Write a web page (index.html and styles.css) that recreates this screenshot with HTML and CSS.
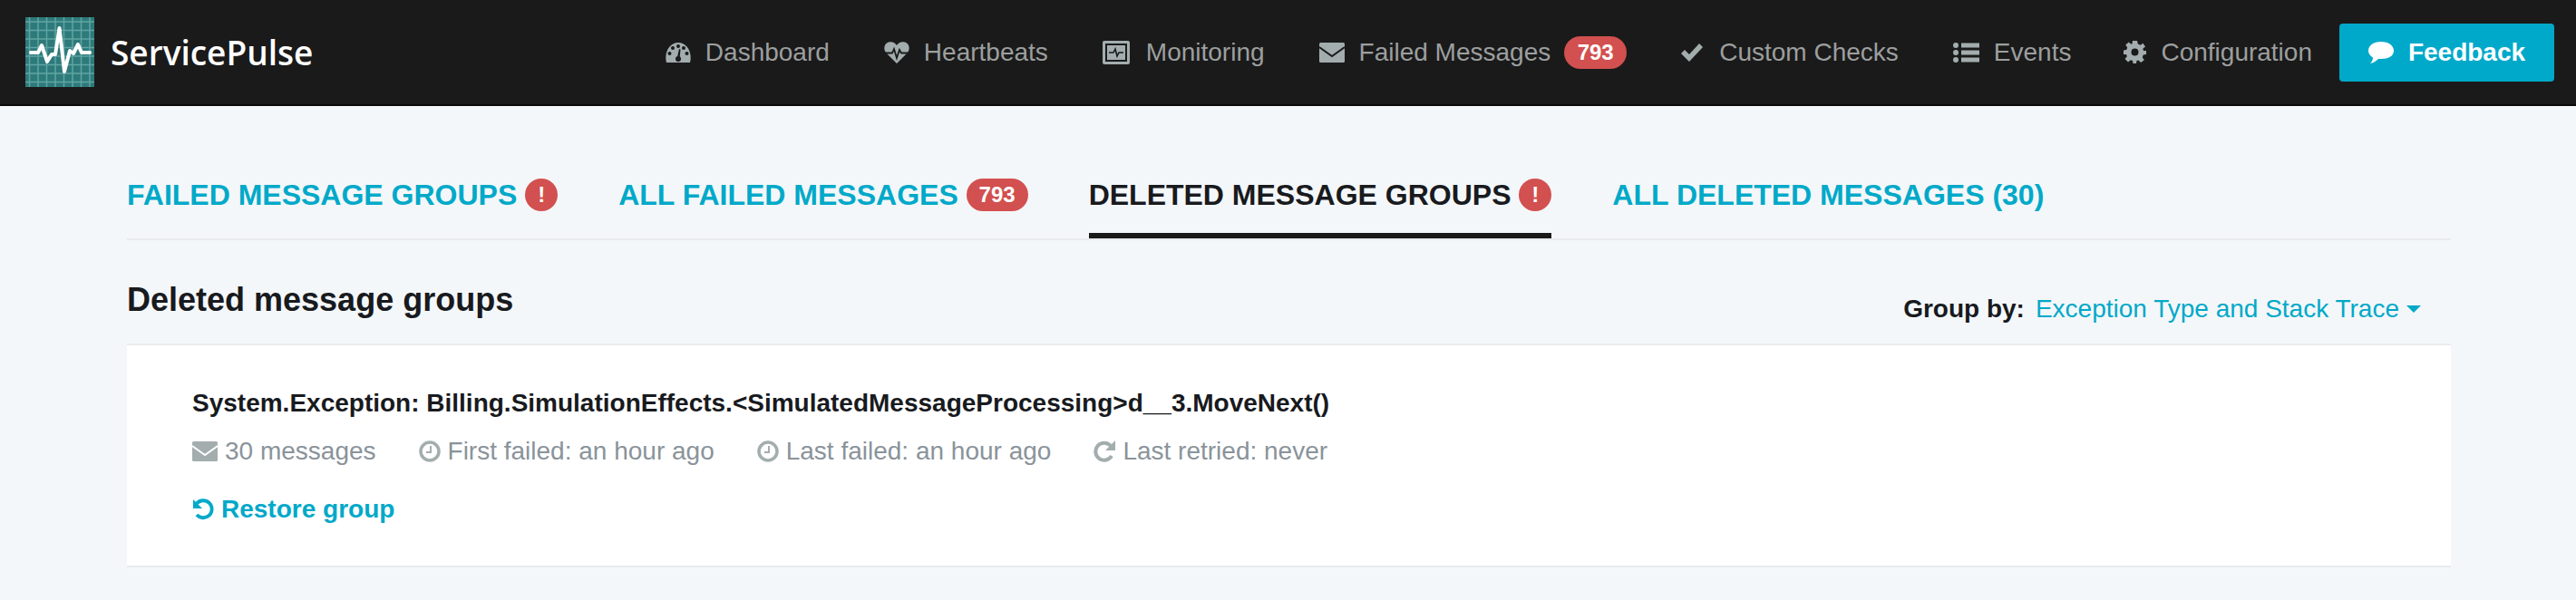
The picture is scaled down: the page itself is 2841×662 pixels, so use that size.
FILE: index.html
```html
<!DOCTYPE html>
<html>
<head lang="en">
    <meta charset="UTF-8">
    <title>ServicePulse</title>
    <link rel="stylesheet" href="styles.css">
</head>
<body>
    <header class="navbar">
        <a class="brand">
            <svg class="logo" viewBox="0 0 76 77">
                <rect width="76" height="77" fill="#2e7a7b"/>
                <path d="M4.500 0V77M14 0V77M23.500 0V77M33 0V77M42.500 0V77M52 0V77M61.500 0V77M71 0V77M0 5H76M0 14.500H76M0 24H76M0 33.500H76M0 43H76M0 52.500H76M0 62H76M0 71.500H76" stroke="#5fa5a3" stroke-width="1.500" fill="none"/>
                <path d="M6 39H14L18 31L24 49L29 41H33L37.500 12L43 60L49 37L53 40L58 30L62 39H71" stroke="#fff" stroke-width="4" stroke-linejoin="round" stroke-linecap="round" fill="none"/>
            </svg>
            <span class="brand-name">ServicePulse</span>
        </a>
        <nav class="nav">
            <a class="nav-item">
                <svg class="ico" width="28" height="22" viewBox="0 0 28 22"><path d="M1 22C-2 10 5 0 14 0S30 10 27 22Z" fill="#a3adad"/><g fill="#1a1a1a"><circle cx="8" cy="6" r="2"/><circle cx="14" cy="4" r="2"/><circle cx="20" cy="6" r="2"/><circle cx="4.500" cy="12" r="2"/><circle cx="23.500" cy="12" r="2"/><circle cx="14" cy="18" r="3"/><path d="M12.500 18L15 7L16.500 7.500L15.500 18Z"/></g></svg>
                Dashboard
            </a>
            <a class="nav-item">
                <svg class="ico" width="28" height="24" viewBox="0 0 28 24"><path d="M14 24L2 12C-1 8 0 2 5 .5C9-.5 12 1 14 4C16 1 19-.5 23 .5C28 2 29 8 26 12Z" fill="#a3adad"/><path d="M0 12.500H9L11 8L14 18L17 9L19 12.500H28" stroke="#1a1a1a" stroke-width="1.800" fill="none"/></svg>
                Heartbeats
            </a>
            <a class="nav-item nav-wide">
                <svg class="ico" width="30" height="26" viewBox="0 0 30 26"><rect width="30" height="26" rx="2" fill="#a3adad"/><rect x="4" y="4" width="22" height="18" fill="none" stroke="#1a1a1a" stroke-width="2"/><path d="M7 13H12L14 9L16 17L18 13H23" fill="none" stroke="#1a1a1a" stroke-width="1.600"/></svg>
                Monitoring
            </a>
            <a class="nav-item">
                <svg class="ico" width="28" height="22" viewBox="0 0 28 22"><rect width="28" height="22" rx="1.500" fill="#a3adad"/><path d="M0 5L14 15L28 5" fill="none" stroke="#1a1a1a" stroke-width="2"/></svg>
                Failed Messages
                <span class="pill nav-pill">793</span>
            </a>
            <a class="nav-item nav-wide">
                <svg class="ico" width="24" height="20" viewBox="0 0 24 20"><path d="M0 11L4 7L9 12L20 0L24 4L9 20Z" fill="#a3adad"/></svg>
                Custom Checks
            </a>
            <a class="nav-item nav-tight">
                <svg class="ico" width="29" height="22" viewBox="0 0 29 22"><g fill="#a3adad"><circle cx="3" cy="3" r="3"/><circle cx="3" cy="11" r="3"/><circle cx="3" cy="19" r="3"/><rect x="9" y=".5" width="20" height="5"/><rect x="9" y="8.500" width="20" height="5"/><rect x="9" y="16.500" width="20" height="5"/></g></svg>
                Events
            </a>
            <a class="nav-item">
                <svg class="ico" width="25" height="25" viewBox="0 0 25 25"><path d="M10 0H15L15.800 3.500L18.500 4.700L21.500 2.800L24 6.500L21.300 8.800L22 11H25V15L21.800 15.500L20.800 18.300L22.800 21.300L19 24L16.500 21.400L14.500 22L14 25H10.500L10 22L7.800 21.200L5 23.500L1.500 20L3.800 17.300L3 15H0V10.500L3.200 10L4.200 7.500L2.200 4.500L5.800 1.500L8.300 3.800L9.500 3.300Z M12.500 8.500A4 4 0 1 0 12.500 16.500A4 4 0 1 0 12.500 8.500Z" fill="#a3adad" fill-rule="evenodd"/></svg>
                Configuration
            </a>
        </nav>
        <a class="feedback">
            <svg width="28" height="24" viewBox="0 0 28 24"><path d="M14 0C22 0 28 4 28 10C28 16 22 19 14 19C13 19 12 19 11 19C9 21 6 23.500 2 24C4 22 5 20 5 17.500C2 16 0 13 0 10C0 4 6 0 14 0Z" fill="#fff"/></svg>
            Feedback
        </a>
    </header>

    <main class="page">
        <div class="tabs">
            <a class="tab">FAILED MESSAGE GROUPS <span class="dot">!</span></a>
            <a class="tab">ALL FAILED MESSAGES <span class="pill tab-pill">793</span></a>
            <a class="tab active">DELETED MESSAGE GROUPS <span class="dot">!</span></a>
            <a class="tab">ALL DELETED MESSAGES (30)</a>
        </div>

        <div class="head-row">
            <h1>Deleted message groups</h1>
            <div class="group-by">
                <b>Group by:</b>
                <a>Exception Type and Stack Trace</a>
                <span class="caret"></span>
            </div>
        </div>

        <section class="card">
            <h2>System.Exception: Billing.SimulationEffects.&lt;SimulatedMessageProcessing&gt;d__3.MoveNext()</h2>
            <div class="meta">
                <span class="meta-item">
                    <svg width="28" height="22" viewBox="0 0 28 22"><rect width="28" height="22" rx="1.500" fill="#a3adad"/><path d="M0 5L14 15L28 5" fill="none" stroke="#fff" stroke-width="2"/></svg>
                    30 messages
                </span>
                <span class="meta-item">
                    <svg width="24" height="24" viewBox="0 0 24 24"><circle cx="12" cy="12" r="10" fill="none" stroke="#a3adad" stroke-width="3.500"/><path d="M13 6V13H8" fill="none" stroke="#a3adad" stroke-width="2"/></svg>
                    First failed: an hour ago
                </span>
                <span class="meta-item">
                    <svg width="24" height="24" viewBox="0 0 24 24"><circle cx="12" cy="12" r="10" fill="none" stroke="#a3adad" stroke-width="3.500"/><path d="M13 6V13H8" fill="none" stroke="#a3adad" stroke-width="2"/></svg>
                    Last failed: an hour ago
                </span>
                <span class="meta-item">
                    <svg width="24" height="24" viewBox="0 0 24 24"><path d="M20 17A9.500 9.500 0 1 1 19 6" fill="none" stroke="#a3adad" stroke-width="4"/><path d="M24 0V11H13Z" fill="#a3adad"/></svg>
                    Last retried: never
                </span>
            </div>
            <a class="restore">
                <svg width="24" height="24" viewBox="0 0 24 24"><path d="M5 5.500A9.500 9.500 0 1 1 5 18" fill="none" stroke="#00a9c9" stroke-width="3.800"/><path d="M1 1V11H11Z" fill="#00a9c9"/></svg>
                Restore group
            </a>
        </section>
    </main>
</body>
</html>
```

FILE: styles.css
```css
* {
    margin: 0;
    padding: 0;
    box-sizing: border-box;
}
body {
    background: #f4f7f9;
    font-family: "Liberation Sans", Arial, sans-serif;
    font-size: 28px;
    color: #181a1e;
}

.navbar {
    display: flex;
    align-items: center;
    height: 117px;
    padding: 0 24px 0 28px;
    background: #1a1a1a;
    border-bottom: 2px solid #0a0a0a;
}
.brand {
    display: flex;
    align-items: center;
    gap: 18px;
}
.logo {
    width: 76px;
    height: 77px;
}
.brand-name {
    font-family: "Open Sans", sans-serif;
    font-weight: 600;
    font-size: 37px;
    color: #fff;
}
.nav {
    display: flex;
    align-items: center;
    gap: 60px;
    margin-left: auto;
    margin-right: 30px;
}
.nav-item {
    display: flex;
    align-items: center;
    color: #9c9f9f;
}
.ico {
    margin-right: 16px;
}
.nav-wide .ico {
    margin-right: 18px;
}
.nav-tight {
    margin-right: -2px;
}
.pill {
    display: inline-block;
    background: #d2504f;
    color: #fff;
    font-weight: bold;
    text-align: center;
    border-radius: 18px;
}
.nav-pill {
    width: 69px;
    height: 36px;
    line-height: 36px;
    margin-left: 15px;
    font-size: 24px;
}
.feedback {
    display: flex;
    align-items: center;
    justify-content: center;
    gap: 16px;
    width: 237px;
    height: 64px;
    background: #00a9c9;
    border-radius: 4px;
    color: #fff;
    font-weight: bold;
}

.page {
    padding: 0 138px 0 140px;
}
.tabs {
    display: flex;
    gap: 67px;
    height: 148px;
    padding-top: 80px;
    border-bottom: 2px solid #e9ebee;
}
.tab {
    height: 66px;
    font-size: 32px;
    line-height: 36px;
    font-weight: bold;
    color: #00a9c9;
    white-space: nowrap;
}
.tab.active {
    color: #181a1e;
    border-bottom: 6px solid #1a1a1a;
}
.dot {
    display: inline-block;
    width: 36px;
    height: 36px;
    line-height: 36px;
    border-radius: 50%;
    background: #d2504f;
    color: #fff;
    font-size: 24px;
    text-align: center;
    vertical-align: top;
}
.tab-pill {
    width: 68px;
    height: 36px;
    line-height: 36px;
    font-size: 24px;
    vertical-align: top;
}

.head-row {
    display: flex;
    justify-content: space-between;
    align-items: flex-end;
    height: 114px;
    padding: 0 33px 22px 0;
}
h1 {
    font-size: 36px;
    margin-bottom: 5px;
}
.group-by {
    display: flex;
    align-items: center;
}
.group-by a {
    margin-left: 12px;
    color: #00a9c9;
}
.caret {
    margin-left: 8px;
    border-left: 8px solid transparent;
    border-right: 8px solid transparent;
    border-top: 8px solid #00a9c9;
}

.card {
    height: 247px;
    padding: 46px 72px 0;
    background: #fff;
    border-top: 2px solid #e9ebee;
    border-bottom: 2px solid #e9ebee;
}
h2 {
    font-size: 28px;
    line-height: 36px;
}
.meta {
    display: flex;
    gap: 47px;
    margin-top: 19px;
    color: #8a939a;
}
.meta-item {
    display: flex;
    align-items: center;
    gap: 8px;
}
.restore {
    display: flex;
    align-items: center;
    gap: 8px;
    margin-top: 32px;
    color: #00a9c9;
    font-weight: bold;
}
```
